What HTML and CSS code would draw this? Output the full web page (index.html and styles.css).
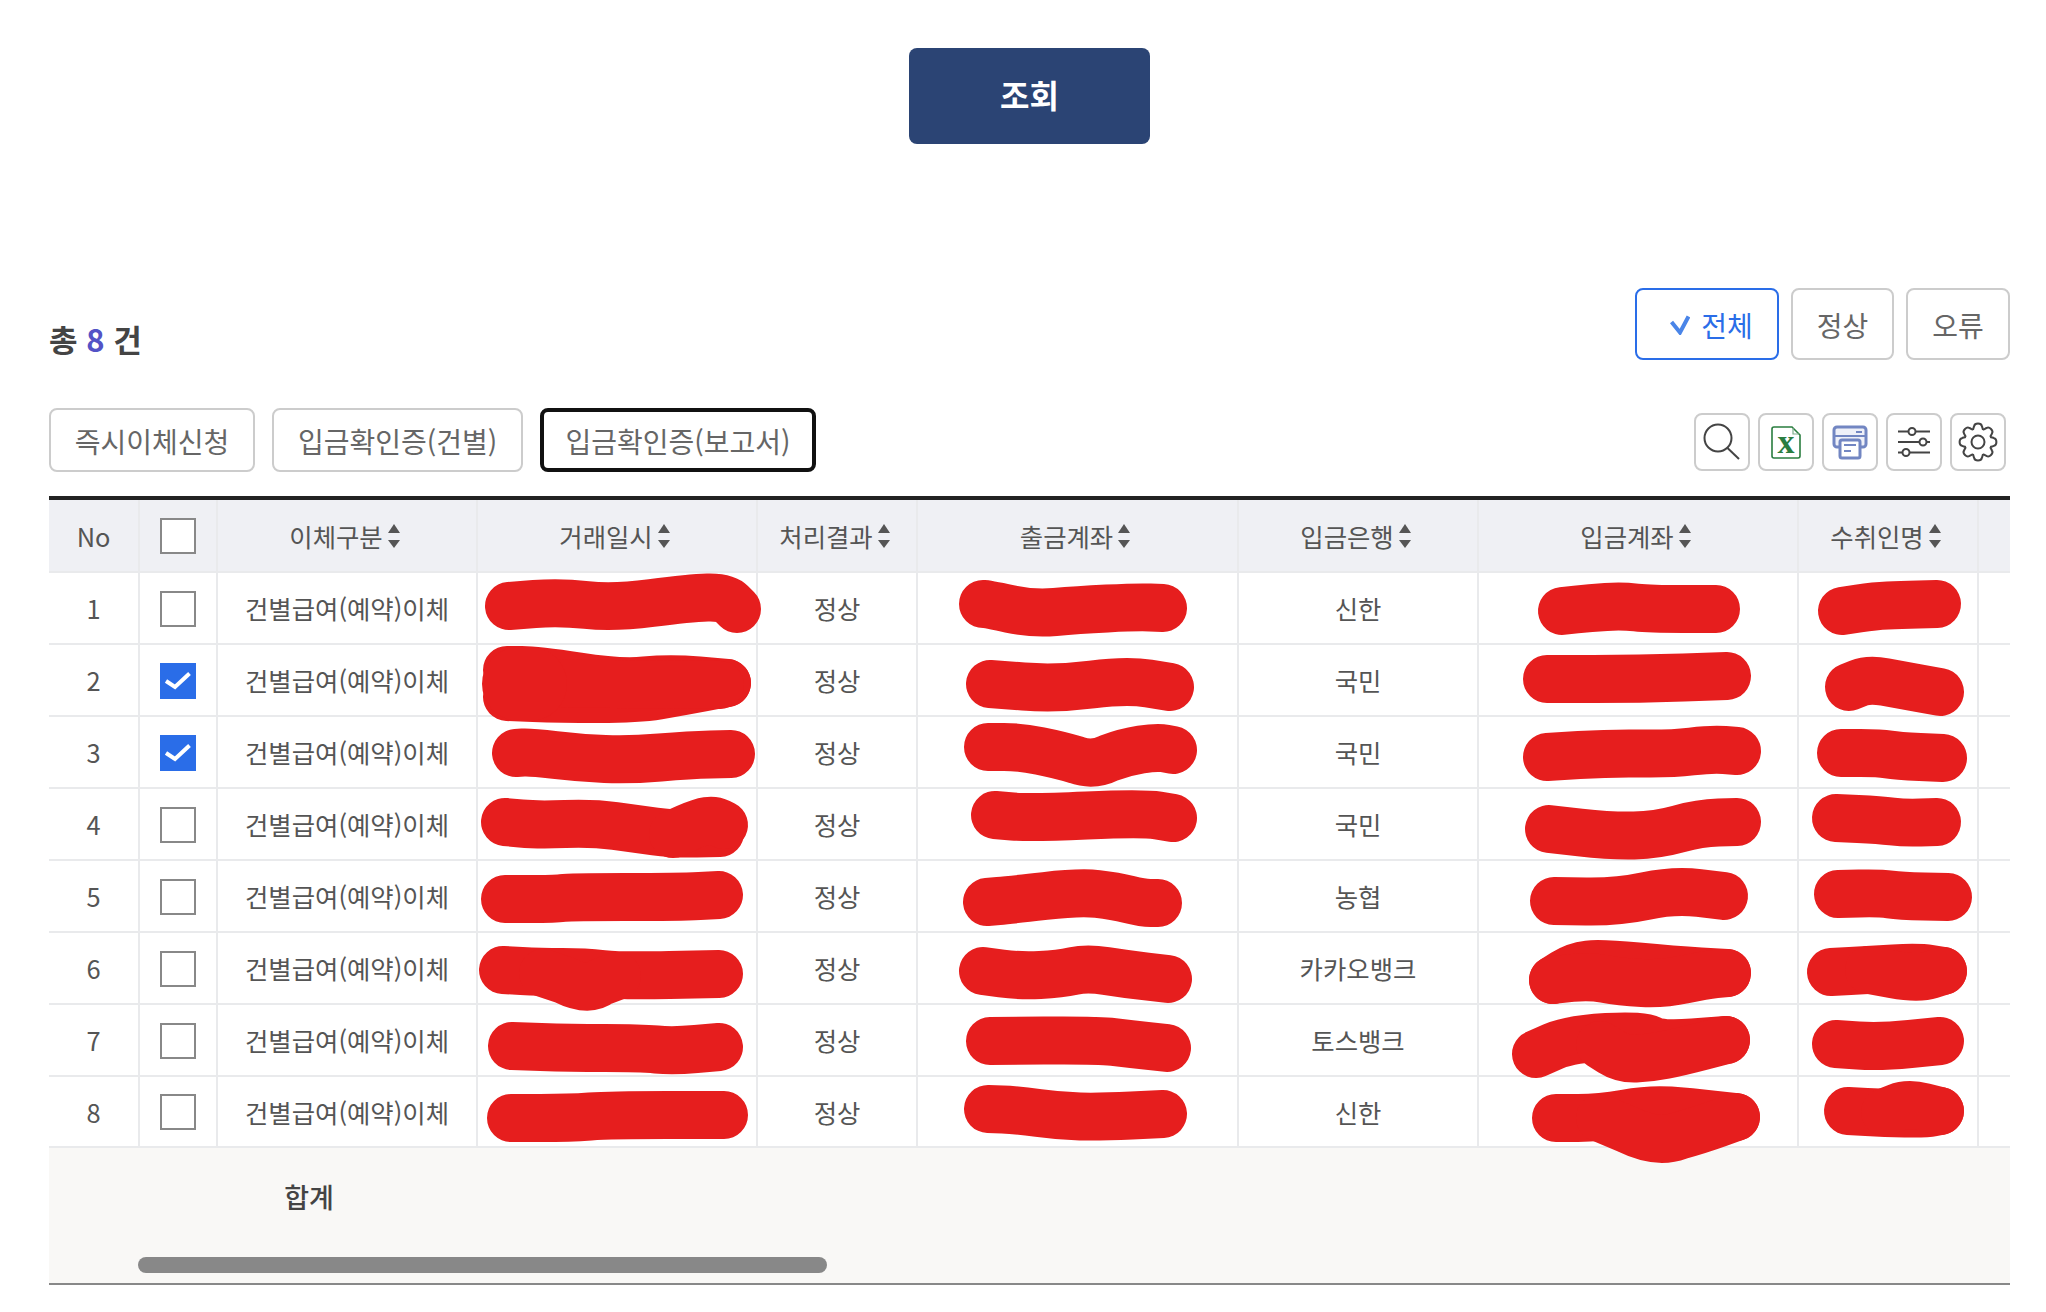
FILE: index.html
```html
<!DOCTYPE html>
<html lang="ko">
<head>
<meta charset="utf-8">
<title>이체내역 조회</title>
<link rel="stylesheet" href="styles.css">
</head>
<body>
<main class="page">
  <div class="search-bar"><button class="search-btn">조회</button></div>

  <div class="summary">
    <div class="total">총 <em>8</em> 건</div>
    <div class="filters">
      <button class="filter filter-on"><svg class="filter-check" viewBox="0 0 20 20"><path d="M1.500 7L10 17.500L18.500 1.500"/></svg>전체</button>
      <button class="filter filter-mid">정상</button>
      <button class="filter filter-end">오류</button>
    </div>
  </div>

  <div class="toolbar">
    <div class="tabs">
      <button class="tab tab-a">즉시이체신청</button>
      <button class="tab tab-b">입금확인증(건별)</button>
      <button class="tab tab-c tab-on">입금확인증(보고서)</button>
    </div>
    <div class="tools">
      <button class="tool"><svg class="ico" viewBox="0 0 40 40"><circle class="line" cx="16" cy="16" r="13.500"/><path class="line" d="M25.500 26L37 37"/></svg></button>
      <button class="tool"><svg class="ico" viewBox="0 0 40 40"><path class="xl" d="M8 5H26L34 13V34a2 2 0 0 1-2 2H8a2 2 0 0 1-2-2V7a2 2 0 0 1 2-2z"/><path class="xl-fold" d="M27 6V12H33"/><text class="xl-x" x="20" y="31">x</text></svg></button>
      <button class="tool"><svg class="ico" viewBox="0 0 40 40"><path class="pr" d="M10 25H7a3 3 0 0 1-3-3V8a3 3 0 0 1 3-3H33a3 3 0 0 1 3 3V22a3 3 0 0 1-3 3H30"/><rect class="pr-paper" x="10" y="18" width="20" height="18" rx="2"/><path class="pr-thin" d="M26 10H32M5 14H35M14 23H26M14 29H21"/></svg></button>
      <button class="tool"><svg class="ico" viewBox="0 0 40 40"><path class="line" d="M4 9.500H14.500M21.500 9.500H36M4 20H25.500M32.500 20H36M4 30.500H8.500M15.500 30.500H36"/><circle class="line" cx="18" cy="9.500" r="3.500"/><circle class="line" cx="29" cy="20" r="3.500"/><circle class="line" cx="12" cy="30.500" r="3.500"/></svg></button>
      <button class="tool"><svg class="ico" viewBox="-20 -20 40 40"><g class="line"><circle r="6.500"/><path d="M12.200-5.050C14-4.400 15-4.300 16-3.800C19.200-3.200 19.200 3.200 16 3.800C15 4.300 14 4.400 12.200 5.050"/><path transform="rotate(45)" d="M12.200-5.050C14-4.400 15-4.300 16-3.800C19.200-3.200 19.200 3.200 16 3.800C15 4.300 14 4.400 12.200 5.050"/><path transform="rotate(90)" d="M12.200-5.050C14-4.400 15-4.300 16-3.800C19.200-3.200 19.200 3.200 16 3.800C15 4.300 14 4.400 12.200 5.050"/><path transform="rotate(135)" d="M12.200-5.050C14-4.400 15-4.300 16-3.800C19.200-3.200 19.200 3.200 16 3.800C15 4.300 14 4.400 12.200 5.050"/><path transform="rotate(180)" d="M12.200-5.050C14-4.400 15-4.300 16-3.800C19.200-3.200 19.200 3.200 16 3.800C15 4.300 14 4.400 12.200 5.050"/><path transform="rotate(225)" d="M12.200-5.050C14-4.400 15-4.300 16-3.800C19.200-3.200 19.200 3.200 16 3.800C15 4.300 14 4.400 12.200 5.050"/><path transform="rotate(270)" d="M12.200-5.050C14-4.400 15-4.300 16-3.800C19.200-3.200 19.200 3.200 16 3.800C15 4.300 14 4.400 12.200 5.050"/><path transform="rotate(315)" d="M12.200-5.050C14-4.400 15-4.300 16-3.800C19.200-3.200 19.200 3.200 16 3.800C15 4.300 14 4.400 12.200 5.050"/></g></svg></button>
    </div>
  </div>

  <table class="grid">
    <colgroup>
      <col class="c1"><col class="c2"><col class="c3"><col class="c4"><col class="c5"><col class="c6"><col class="c7"><col class="c8"><col class="c9"><col>
    </colgroup>
    <thead>
      <tr>
        <th>No</th>
        <th><span class="cb"></span></th>
        <th><span class="th-in">이체구분<i class="sort"></i></span></th>
        <th><span class="th-in">거래일시<i class="sort"></i></span></th>
        <th><span class="th-in">처리결과<i class="sort"></i></span></th>
        <th><span class="th-in">출금계좌<i class="sort"></i></span></th>
        <th><span class="th-in">입금은행<i class="sort"></i></span></th>
        <th><span class="th-in">입금계좌<i class="sort"></i></span></th>
        <th><span class="th-in">수취인명<i class="sort"></i></span></th>
        <th></th>
      </tr>
    </thead>
    <tbody>
      <tr><td>1</td><td><span class="cb"></span></td><td>건별급여(예약)이체</td><td></td><td>정상</td><td></td><td>신한</td><td></td><td></td><td></td></tr>
      <tr><td>2</td><td><span class="cb cb-on"><svg viewBox="0 0 36 36"><path d="M6 18L15 24L29.500 10.500"/></svg></span></td><td>건별급여(예약)이체</td><td></td><td>정상</td><td></td><td>국민</td><td></td><td></td><td></td></tr>
      <tr><td>3</td><td><span class="cb cb-on"><svg viewBox="0 0 36 36"><path d="M6 18L15 24L29.500 10.500"/></svg></span></td><td>건별급여(예약)이체</td><td></td><td>정상</td><td></td><td>국민</td><td></td><td></td><td></td></tr>
      <tr><td>4</td><td><span class="cb"></span></td><td>건별급여(예약)이체</td><td></td><td>정상</td><td></td><td>국민</td><td></td><td></td><td></td></tr>
      <tr><td>5</td><td><span class="cb"></span></td><td>건별급여(예약)이체</td><td></td><td>정상</td><td></td><td>농협</td><td></td><td></td><td></td></tr>
      <tr><td>6</td><td><span class="cb"></span></td><td>건별급여(예약)이체</td><td></td><td>정상</td><td></td><td>카카오뱅크</td><td></td><td></td><td></td></tr>
      <tr><td>7</td><td><span class="cb"></span></td><td>건별급여(예약)이체</td><td></td><td>정상</td><td></td><td>토스뱅크</td><td></td><td></td><td></td></tr>
      <tr class="row-last"><td>8</td><td><span class="cb"></span></td><td>건별급여(예약)이체</td><td></td><td>정상</td><td></td><td>신한</td><td></td><td></td><td></td></tr>
    </tbody>
    <tfoot>
      <tr><td></td><td colspan="2" class="sum">합계</td><td colspan="7"></td></tr>
    </tfoot>
  </table>
  <div class="scroll-track"><div class="scroll-thumb"></div></div>

  <svg class="scribbles" viewBox="0 0 2046 1312">
    <path d="M509 606L534.500 604Q560 602 586.500 605Q613 608 651.500 603Q690 598 707.500 597.500Q725 597 731 603L737 609"/>
    <path d="M507 670L522 670Q537 670 578.500 676.500Q620 683 645 680.500Q670 678 698.500 680.500L727 683"/>
    <path d="M507 697L533.500 698Q560 699 598.500 699Q637 699 658.500 695.500Q680 692 703.500 687.500L727 683"/>
    <path d="M507 683L720 685"/>
    <path class="fat" d="M519 684L530 684"/>
    <path d="M516 753L523 752.500Q530 752 555 755Q580 758 605 759Q630 760 660 757.500Q690 755 710.500 754.500L731 754"/>
    <path d="M505 822L521 823.500Q537 825 565 824Q593 823 615 826Q637 829 655 831.500Q673 834 696.500 833.500L720 833"/>
    <path d="M673 834L686.500 828Q700 822 707 821Q714 820 719 822.500L724 825"/>
    <path d="M505 899L530 899Q555 899 562.500 898Q570 897 625 897Q680 897 699.500 896L719 895"/>
    <path d="M503 970L521.500 971Q540 972 562.500 972Q585 972 602.500 974Q620 976 669.500 975L719 974"/>
    <path d="M543 973L564 980Q588 992 601 982L617 976"/>
    <path d="M512 1046L541 1047Q570 1048 605 1048Q640 1048 656.500 1049.500Q673 1051 696 1049L719 1047"/>
    <path d="M511 1118L540.500 1118Q570 1118 590 1116.500Q610 1115 667 1115L724 1115"/>

    <path d="M983 604L985 604Q987 604 1010 609Q1033 614 1055 612Q1077 610 1107 608.500Q1137 607 1150 607.500L1163 608"/>
    <path d="M990 684L1023.500 686.500Q1057 689 1092 684.500Q1127 680 1148.500 683.500L1170 687"/>
    <path d="M988 747L1004 747Q1020 747 1040 751Q1060 755 1076.500 760Q1093 766 1109 758Q1125 752 1141 749.500Q1157 747 1165 748.500L1173 750"/>
    <path d="M995 815L1012.500 816.500Q1030 818 1086.500 815.500Q1143 813 1158 815.500L1173 818"/>
    <path d="M987 902L998.500 901Q1010 900 1045 896Q1080 892 1097.500 894Q1115 896 1129 899.500Q1143 903 1150.500 903L1158 903"/>
    <path d="M983 971L1001.500 973.500Q1020 976 1040 975Q1060 974 1073.500 971Q1087 968 1106 971Q1125 974 1146.500 976.500L1168 979"/>
    <path d="M990 1041L1043.500 1040.500Q1097 1040 1113.500 1042Q1130 1044 1148.500 1046L1167 1048"/>
    <path d="M988 1109L1002.500 1109.500Q1017 1110 1038.500 1113Q1060 1116 1080 1116.500Q1100 1117 1131.500 1115.500L1163 1114"/>

    <path d="M1562 611L1576 609.500Q1590 608 1606 607Q1622 606 1636 607.500Q1650 609 1683 609L1716 609"/>
    <path d="M1547 679L1593.500 679Q1640 679 1683.500 677.500L1727 676"/>
    <path d="M1547 757L1579 755Q1611 753 1641 753.500Q1671 754 1691.500 751.500Q1712 749 1724.500 750L1737 751"/>
    <path d="M1549 829L1580 832.500Q1611 836 1634 835.500Q1657 835 1678.500 829Q1700 823 1718.500 822.500L1737 822"/>
    <path d="M1554 901L1586 901.500Q1618 902 1646 896Q1674 890 1699 893L1724 896"/>
    <path d="M1553 980L1564 973Q1575 966 1588 964.500Q1601 963 1637.500 966.500Q1674 970 1700.500 971.500L1727 973"/>
    <path d="M1553 980L1571.500 978Q1590 976 1605 979Q1620 982 1642 983Q1664 984 1684.500 979.500Q1705 975 1716 974L1727 973"/>
    <path d="M1536 1054L1553 1046.500Q1570 1039 1606.500 1037Q1643 1035 1651.500 1040Q1660 1045 1693 1042.500L1726 1040"/>
    <path d="M1600 1045L1611 1052Q1622 1059 1636 1058.500Q1650 1058 1665 1055Q1680 1052 1703 1046L1726 1040"/>
    <path d="M1556 1118L1578 1118Q1600 1118 1625 1113.500Q1650 1109 1670 1110.500Q1690 1112 1713 1114.500L1736 1117"/>
    <path d="M1600 1118L1628.500 1130Q1657 1144 1678.500 1136Q1700 1130 1718 1123.500L1736 1117"/>

    <path d="M1842 611L1858.500 608.500Q1875 606 1887.500 605.500Q1900 605 1918.500 604.500L1937 604"/>
    <path d="M1849 687L1859 683Q1869 679 1885 682Q1901 685 1920.500 688.500L1940 692"/>
    <path d="M1841 753L1860.500 753Q1880 753 1888.500 754.500Q1897 756 1920 757L1943 758"/>
    <path d="M1836 818L1858 819Q1880 820 1892 821.500Q1904 823 1920.500 822.500L1937 822"/>
    <path d="M1838 894L1859 893.500Q1880 893 1890 894.500Q1900 896 1924 896.500L1948 897"/>
    <path d="M1831 972L1850 971Q1869 970 1893.500 968.500Q1918 967 1930.500 969L1943 971"/>
    <path d="M1869 970L1893.500 974.500Q1918 979 1930.500 975L1943 971"/>
    <path d="M1836 1044L1858 1045.500Q1880 1047 1910 1044L1940 1041"/>
    <path d="M1848 1111L1866.500 1112Q1885 1113 1905 1113.500Q1925 1114 1932.500 1112.500L1940 1111"/>
    <path d="M1885 1112L1896.500 1107.500Q1908 1103 1924 1107L1940 1111"/>
  </svg>
</main>
</body>
</html>
```
FILE: styles.css
```css
* { box-sizing: border-box; }
html, body { margin: 0; padding: 0; background: #fff; }
body {
  font-family: "Noto Sans CJK KR", "Noto Sans", sans-serif;
  color: #555;
  overflow: hidden;
}
button { font-family: inherit; background: #fff; cursor: pointer; padding: 0; }

.page { position: relative; height: 1312px; padding: 48px 36px 0 49px; }

.search-bar { display: flex; justify-content: center; }
.search-btn {
  width: 241px; height: 96px;
  padding-bottom: 4px;
  background: #2b4474; color: #fff;
  border: 0; border-radius: 8px;
  font-size: 32px; font-weight: 700;
}

.summary { display: flex; justify-content: space-between; align-items: flex-end; margin-top: 144px; }
.total { font-size: 31px; font-weight: 700; line-height: 42px; color: #444; }
.total em { font-style: normal; color: #5353c6; }
.filters { display: flex; gap: 12px; }
.filter {
  height: 72px; width: 103px;
  padding-top: 2px;
  border: 2px solid #ccc; border-radius: 8px;
  font-size: 28px; color: #666;
  display: flex; align-items: center; justify-content: center;
}
.filter-end { width: 104px; }
.filter-on { width: 144px; gap: 11px; padding-left: 9px; border-color: #2a6de8; color: #2a6de8; }
.filter-check { width: 20px; height: 20px; }
.filter-check path { fill: none; stroke: #4a85e8; stroke-width: 4; }

.toolbar { display: flex; justify-content: space-between; align-items: center; margin-top: 48px; }
.tabs { display: flex; gap: 17px; }
.tab {
  height: 64px;
  padding-top: 1px;
  border: 2px solid #ccc; border-radius: 8px;
  font-size: 28px; color: #666;
}
.tab-a { width: 206px; }
.tab-b { width: 251px; }
.tab-c { width: 276px; }
.tab-on { border: 4px solid #111; }
.tools { display: flex; gap: 8px; padding-right: 4px; margin-top: 4px; }
.tool {
  width: 56px; height: 58px;
  border: 2px solid #ccc; border-radius: 8px;
  display: flex; align-items: center; justify-content: center;
}
.ico { width: 40px; height: 40px; display: block; }
.line { fill: none; stroke: #444; stroke-width: 2; }
.xl { fill: #fff; stroke: #2a7d3f; stroke-width: 1.600; }
.xl-fold { fill: none; stroke: #7fb08e; stroke-width: 1.200; }
.xl-x { fill: #2a7d3f; font-family: "Liberation Serif", serif; font-size: 34px; font-weight: 700; text-anchor: middle; }
.pr { fill: #eef0f8; stroke: #7286c2; stroke-width: 3; }
.pr-paper { fill: #fff; stroke: #7286c2; stroke-width: 3; }
.pr-thin { fill: none; stroke: #7286c2; stroke-width: 2; }

.grid {
  width: 100%;
  margin-top: 24px;
  table-layout: fixed;
  border-collapse: separate; border-spacing: 0;
  border-top: 4px solid #222;
  font-size: 25.400px;
}
.c1 { width: 91px; }
.c2 { width: 78px; }
.c3 { width: 260px; }
.c4 { width: 280px; }
.c5 { width: 160px; }
.c6 { width: 321px; }
.c7 { width: 240px; }
.c8 { width: 320px; }
.c9 { width: 180px; }
.grid th, .grid td {
  padding: 0;
  height: 72px;
  text-align: center;
  font-weight: 400;
  border-right: 2px solid #e9eaec;
  border-bottom: 2px solid #e9eaec;
  white-space: nowrap;
}
.grid th:last-child, .grid td:last-child { border-right: 0; }
.grid thead th { background: #eff0f4; height: 73px; }
.row-last td { height: 71px; }
.grid tfoot td { height: 99px; background: #f9f8f6; border: 0; padding-bottom: 2px; }
.grid tfoot .sum { font-size: 27px; font-weight: 500; color: #444; }

.th-in { display: inline-flex; align-items: center; gap: 5px; margin: -5px 0 0 -5px; }
.sort { display: inline-flex; flex-direction: column; gap: 7px; }
.sort::before, .sort::after { content: ""; border-left: 6px solid transparent; border-right: 6px solid transparent; }
.sort::before { border-bottom: 9px solid #555; }
.sort::after { border-top: 8px solid #555; }

.cb {
  display: inline-block; vertical-align: middle;
  width: 36px; height: 36px;
  margin-bottom: 2px;
  border: 2px solid #888; background: #fff;
}
.cb-on { border: 0; background: #2a6de8; }
.cb-on svg { display: block; width: 36px; height: 36px; }
.cb-on path { fill: none; stroke: #fff; stroke-width: 4; }

.scroll-track {
  height: 38px; padding: 10px 0 0 89px;
  background: #f9f8f6;
  border-bottom: 2px solid #888;
}
.scroll-thumb { width: 689px; height: 16px; background: #888; border-radius: 8px; }

.scribbles { position: absolute; left: 0; top: 0; width: 2046px; height: 1312px; pointer-events: none; }
.scribbles path { fill: none; stroke: #e61e1e; stroke-width: 48; stroke-linecap: round; stroke-linejoin: round; }
.scribbles .fat { stroke-width: 74; }
```
